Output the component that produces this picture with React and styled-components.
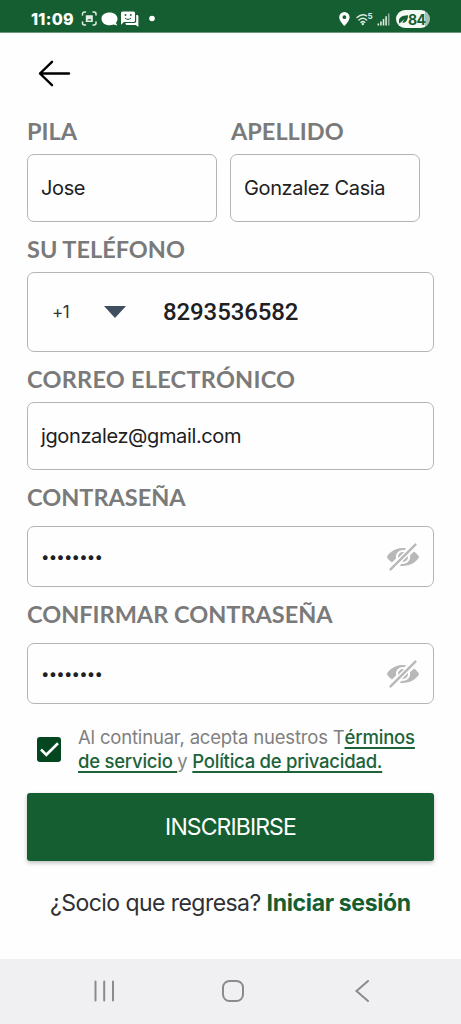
import styled, { createGlobalStyle } from "styled-components";

const GlobalStyle = createGlobalStyle`
  * {
    box-sizing: border-box;
  }

  body {
    margin: 0;
    background: #fefefe;
    font-family: Inter, "Liberation Sans", sans-serif;
  }
`;

const Screen = styled.div`
  display: flex;
  flex-direction: column;
  width: 461px;
  height: 1024px;
  overflow: hidden;
  background: #fefefe;
`;

const StatusBar = styled.header`
  display: flex;
  align-items: center;
  justify-content: space-between;
  height: 33px;
  padding: 6px 31px 0;
  background: #155e31;
  border-bottom: 1px solid #6d9a7e;
  color: #fff;
`;

const StatusGroup = styled.div`
  display: flex;
  align-items: center;
`;

const Clock = styled.span`
  width: 50px;
  font-size: 16px;
  font-weight: 800;
  line-height: 20px;
  letter-spacing: 0.3px;
  white-space: nowrap;
`;

const Battery = styled.div`
  display: flex;
  align-items: center;
  width: 34px;
  height: 18px;
  padding-left: 3px;
  border-radius: 9px;
  background: linear-gradient(90deg, #f3faf5 84%, #a5c2b0 84%);
  color: #155e31;
  font-size: 14px;
  font-weight: 700;
  letter-spacing: -0.6px;
`;

const Content = styled.main`
  flex: 1;
  display: flex;
  flex-direction: column;
  padding: 22px 27px 0;
`;

const BackButton = styled.button`
  display: flex;
  width: 50px;
  height: 38px;
  padding: 0 0 0 10px;
  border: 0;
  background: none;
`;

const NameRow = styled.div`
  display: flex;
  gap: 13px;
  margin-top: 11px;
`;

const Field = styled.div`
  width: ${(props) => props.$width || "100%"};
`;

const Label = styled.div`
  height: 36px;
  margin: 9px 0 ${(props) => props.$gap || 5}px;
  padding-left: ${(props) => props.$indent || 0}px;
  color: #7a7a7a;
  font-family: Lato, sans-serif;
  font-size: 23.5px;
  font-weight: 700;
  line-height: 36px;
  letter-spacing: ${(props) => props.$spacing || 0}px;
  white-space: nowrap;
`;

const Box = styled.div`
  display: flex;
  align-items: center;
  height: ${(props) => props.$height || 68}px;
  padding: 0 13px;
  border: 1px solid #b4b4b4;
  border-radius: 7px;
`;

const Value = styled.span`
  color: #202022;
  font-size: 20px;
  font-weight: 400;
  letter-spacing: -0.37px;
  white-space: nowrap;
`;

const PhoneNumber = styled(Value)`
  font-family: Roboto, sans-serif;
  font-size: 24px;
  font-weight: 500;
  letter-spacing: -0.1px;
`;

const Dots = styled(Value)`
  font-size: 15px;
  letter-spacing: -0.8px;
`;

const Prefix = styled.span`
  width: 52px;
  margin-left: 11px;
  color: #333;
  font-size: 17px;
  letter-spacing: -0.5px;
`;

const Caret = styled.svg`
  width: 22px;
  height: 12px;
  margin-right: 37px;
`;

const Toggle = styled.svg`
  width: 32px;
  height: 32px;
  margin-left: auto;
  margin-right: 1px;
  fill: #b8b8b8;
`;

const Terms = styled.div`
  display: flex;
  align-items: center;
  gap: 17px;
  height: 50px;
  margin-top: 20px;
  padding-left: 10px;
`;

const Checkbox = styled.div`
  display: flex;
  flex-shrink: 0;
  width: 24px;
  height: 25px;
  border-radius: 3px;
  background: #034620;
`;

const TermsText = styled.div`
  color: #808080;
  font-size: 18.5px;
  line-height: 24px;
  white-space: nowrap;
`;

const TermsLine = styled.div`
  letter-spacing: ${(props) => props.$spacing}px;
`;

const Link = styled.span`
  color: #1b6339;
  font-weight: 500;
  text-decoration: underline;
  text-decoration-thickness: 1.5px;
  text-underline-offset: 3px;
  text-decoration-skip-ink: none;
`;

const Submit = styled.button`
  flex-shrink: 0;
  height: 68px;
  margin-top: 19px;
  padding: 0;
  border: 0;
  border-radius: 3px;
  background: #155e31;
  box-shadow: 0 2px 4px rgba(0, 0, 0, 0.25);
  color: #fff;
  font-family: inherit;
  font-size: 23px;
  font-weight: 400;
  letter-spacing: -0.9px;
`;

const SignIn = styled.div`
  margin-top: 26px;
  padding-left: 23px;
  color: #2f3033;
  font-size: 23px;
  line-height: 32px;
  letter-spacing: -0.55px;
  white-space: nowrap;

  b {
    color: #155e31;
    font-weight: 700;
    letter-spacing: -0.35px;
  }
`;

const NavBar = styled.nav`
  display: flex;
  height: 65px;
  background: #f0f0f2;

  svg {
    width: 461px;
    height: 65px;
  }
`;

function LeftIcons() {
  return (
    <svg width="78" height="18" viewBox="0 0 78 18" fill="none">
      <g stroke="#e4efe8" strokeWidth="1.5" strokeLinecap="round">
        <path d="M1.5 5V4a2 2 0 0 1 2-2h1M12 2h1a2 2 0 0 1 2 2v1M15 12v1a2 2 0 0 1-2 2h-1M4.5 15h-1a2 2 0 0 1-2-2v-1" />
      </g>
      <path fill="#e4efe8" fillRule="evenodd" d="M4.8 5.200h7v6.800h-7zm1.400 5.300h4.300L9 8.500l-1.100 1.200-.6-.6z" />
      <path fill="#fff" d="M28.5 2.500c4.600 0 8 2.700 8 6.200 0 1.700-.7 3-1.600 4l1.400 2.800-3.600-1c-1.200.5-2.600.8-4.200.8-4.600 0-8-2.900-8-6.600s3.400-6.200 8-6.200z" />
      <path fill="#fff" d="M41.500 1.500h11a1.500 1.500 0 0 1 1.500 1.500v7.500a1.500 1.500 0 0 1-1.500 1.500H43l-3 2.700V3a1.500 1.500 0 0 1 1.500-1.500z" />
      <path fill="#fff" d="M55.200 5h.8a1.400 1.400 0 0 1 1.400 1.400v10.400L54.500 15H46a1.500 1.500 0 0 1-1.500-1.500V13h9a1.700 1.700 0 0 0 1.700-1.700z" />
      <circle cx="44.500" cy="5" r=".9" fill="#155e31" />
      <circle cx="49.800" cy="5" r=".9" fill="#155e31" />
      <path stroke="#155e31" d="M44 8c1.500 1.800 4.500 1.800 6 0" />
      <circle cx="71" cy="8.500" r="2.800" fill="#fff" />
    </svg>
  );
}

function RightIcons() {
  return (
    <svg width="57" height="18" viewBox="0 0 57 18" fill="none">
      <path
        fill="#fff"
        fillRule="evenodd"
        d="M5.400 2a5.200 5.200 0 0 1 5.200 5.200C10.600 11 5.400 16 5.400 16S.2 11 .2 7.200A5.200 5.200 0 0 1 5.400 2zm0 3.300a1.900 1.900 0 1 0 0 3.800 1.900 1.900 0 0 0 0-3.800z"
      />
      <g stroke="#dcebe1" strokeWidth="1.5" strokeLinecap="round">
        <path d="M18 7.500c3-2.700 7-3.200 9.500-1.700M20 10c2.300-2 5.400-2 7.600 0M22 12.300c1.200-1 2.500-1 3.700 0" />
      </g>
      <circle cx="23.800" cy="14" r="1.200" fill="#dcebe1" />
      <text x="28.500" y="9" fontSize="8" fontWeight="700" fill="#dcebe1">
        5
      </text>
      <path stroke="#dcebe1" strokeWidth="1.6" d="M39.300 15.500v-2M41.900 15.500v-4M44.500 15.500V9M47.100 15.500V6.300" />
      <path stroke="#8bb09a" strokeWidth="1.6" d="M49.700 15.500V3.500" />
    </svg>
  );
}

function EyeOff() {
  return (
    <Toggle viewBox="0 0 20 20">
      <path d="M18.300 1.700a.75.75 0 0 0-1.060 0L1.700 17.240a.75.75 0 1 0 1.060 1.060L18.300 2.760a.75.75 0 0 0 0-1.060z" />
      <path d="M3.108 13.498l2.560-2.560A4.200 4.200 0 0 1 5.556 10c0-2.379 1.989-4.309 4.443-4.309.286 0 .564.032.835.082l1.203-1.202A12.600 12.600 0 0 0 10 4.401C3.440 4.400 0 9.231 0 10c0 .423 1.057 2.090 3.108 3.498z" />
      <path d="M16.892 6.502l-2.562 2.560c.070.303.113.613.113.938 0 2.379-1.989 4.307-4.443 4.307-.284 0-.560-.032-.829-.081l-1.204 1.203c.642.104 1.316.170 2.033.170 6.560 0 10-4.833 10-5.599 0-.423-1.057-2.089-3.108-3.498z" />
      <path d="M13.100 9.998c0-.220-.020-.400-.060-.600l-3.600 3.580c.200.040.360.060.560.060 1.740 0 3.100-1.360 3.100-3.040zM6.900 9.998c0 .220.030.440.080.640l3.660-3.620a3 3 0 0 0-.640-.080c-1.740 0-3.100 1.380-3.100 3.060z" />
    </Toggle>
  );
}

function PasswordField({ label }) {
  return (
    <Field>
      <Label $gap={11}>{label}</Label>
      <Box $height={61}>
        <Dots>••••••••</Dots>
        <EyeOff />
      </Box>
    </Field>
  );
}

export default function App() {
  return (
    <Screen>
      <GlobalStyle />
      <StatusBar>
        <StatusGroup>
          <Clock>11:09</Clock>
          <LeftIcons />
        </StatusGroup>
        <StatusGroup>
          <RightIcons />
          <Battery>
            <svg width="9" height="12" viewBox="0 0 11 12">
              <path fill="#155e31" d="M0 9C-.5 4.500 3 1.500 11 1.300 11.300 7 8 11.500 4 10.600L7 6 2.500 10 0 11.500z" />
            </svg>
            84
          </Battery>
        </StatusGroup>
      </StatusBar>

      <Content>
        <BackButton aria-label="Volver">
          <svg width="34" height="38" viewBox="0 0 34 38" fill="none" stroke="#000" strokeWidth="2.4" strokeLinecap="round" strokeLinejoin="round">
            <path d="M32 18.500H3M15 6.800L3 18.500L15 30.200" />
          </svg>
        </BackButton>

        <NameRow>
          <Field $width="190px">
            <Label>PILA</Label>
            <Box>
              <Value>Jose</Value>
            </Box>
          </Field>
          <Field $width="190px">
            <Label $indent={1}>APELLIDO</Label>
            <Box>
              <Value>Gonzalez Casia</Value>
            </Box>
          </Field>
        </NameRow>

        <Field>
          <Label>SU TELÉFONO</Label>
          <Box $height={80}>
            <Prefix>+1</Prefix>
            <Caret viewBox="0 0 22 12">
              <path fill="#3f4e5e" d="M0 0h22L11 12z" />
            </Caret>
            <PhoneNumber>8293536582</PhoneNumber>
          </Box>
        </Field>

        <Field>
          <Label $spacing={0.25}>CORREO ELECTRÓNICO</Label>
          <Box>
            <Value>jgonzalez@gmail.com</Value>
          </Box>
        </Field>

        <PasswordField label="CONTRASEÑA" />
        <PasswordField label="CONFIRMAR CONTRASEÑA" />

        <Terms>
          <Checkbox>
            <svg width="24" height="25" viewBox="0 0 24 25" fill="none" stroke="#fff" strokeWidth="2.6">
              <path d="M4 12.500l5.300 5.300L21 6.300" />
            </svg>
          </Checkbox>
          <TermsText>
            <TermsLine $spacing={-0.18}>
              Al continuar, acepta nuestros T<Link>érminos</Link>
            </TermsLine>
            <TermsLine $spacing={-0.25}>
              <Link>de servicio </Link>y <Link>Política de privacidad.</Link>
            </TermsLine>
          </TermsText>
        </Terms>

        <Submit>INSCRIBIRSE</Submit>

        <SignIn>
          ¿Socio que regresa? <b>Iniciar sesión</b>
        </SignIn>
      </Content>

      <NavBar>
        <svg viewBox="0 0 461 65" fill="none" stroke="#8b8b8d" strokeWidth="2" strokeLinecap="round">
          <path d="M95.500 22.500v19M104.200 22.500v19M113 22.500v19" />
          <rect x="223" y="22" width="20" height="20" rx="6.500" />
          <path d="M368 22L356.500 32L368 42" />
        </svg>
      </NavBar>
    </Screen>
  );
}
